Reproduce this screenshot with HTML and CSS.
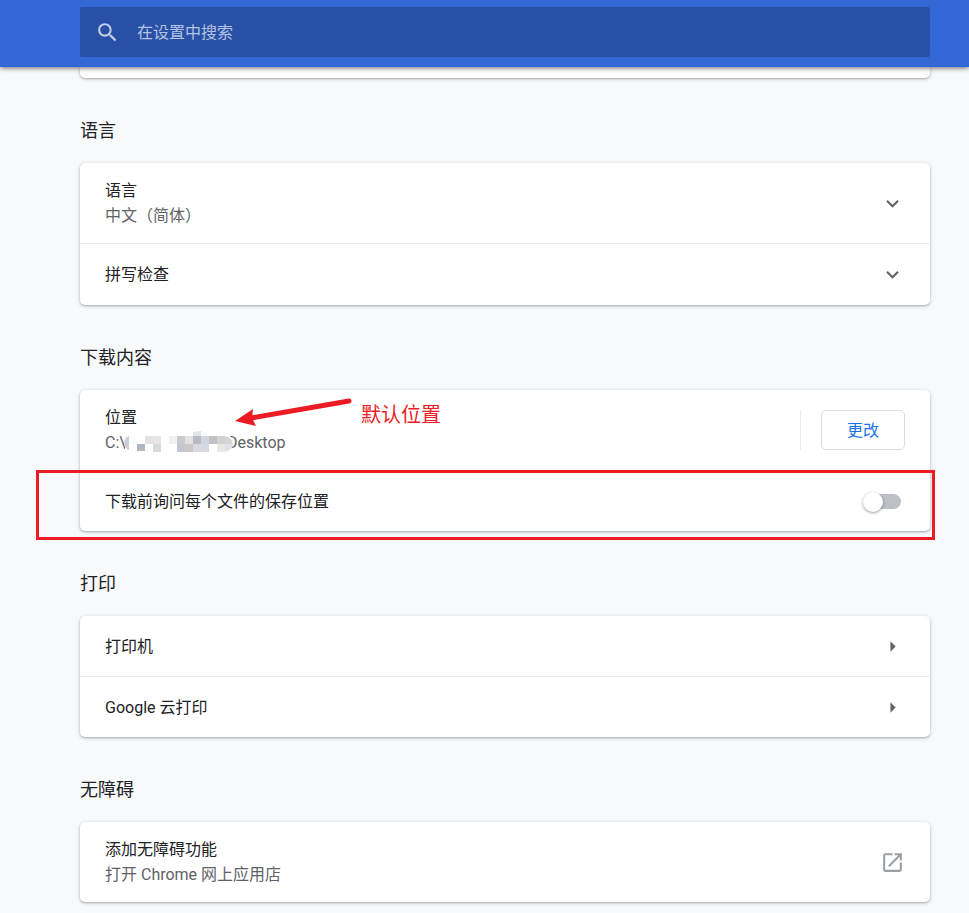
FILE: index.html
```html
<!DOCTYPE html>
<html lang="zh-CN">
<head>
<meta charset="UTF-8">
<meta name="viewport" content="width=device-width, initial-scale=1.0">
<title>设置</title>
<link rel="stylesheet" href="styles.css">
</head>
<body>
<header class="toolbar">
  <label class="search">
    <svg class="search-icon" viewBox="0 0 24 24" aria-hidden="true"><path d="M15.5 14h-.79l-.28-.27A6.47 6.47 0 0 0 16 9.5 6.5 6.5 0 1 0 9.5 16c1.61 0 3.09-.59 4.23-1.57l.27.28v.79l5 4.99L20.49 19l-4.99-5zm-6 0C7.01 14 5 11.99 5 9.5S7.01 5 9.5 5 14 7.01 14 9.5 11.99 14 9.5 14z"/></svg>
    <input type="search" placeholder="在设置中搜索" aria-label="在设置中搜索">
  </label>
</header>

<main class="settings">
  <div class="card card-end"></div>

  <section>
    <h2>语言</h2>
    <div class="card">
      <div class="row two-line">
        <div class="text">
          <div>语言</div>
          <div class="secondary">中文（简体）</div>
        </div>
        <button class="icon-button" aria-label="语言"><svg viewBox="0 0 24 24"><path d="M7.41 8.59 12 13.17l4.59-4.58L18 10l-6 6-6-6z"/></svg></button>
      </div>
      <div class="row expand">
        <div class="text">拼写检查</div>
        <button class="icon-button" aria-label="拼写检查"><svg viewBox="0 0 24 24"><path d="M7.41 8.59 12 13.17l4.59-4.58L18 10l-6 6-6-6z"/></svg></button>
      </div>
    </div>
  </section>

  <section>
    <h2>下载内容</h2>
    <div class="card">
      <div class="row two-line">
        <div class="text">
          <div>位置</div>
          <div class="secondary path">
            <span class="drive">C:\</span><span>Desktop</span>
            <svg class="mosaic" viewBox="0 0 112 24" aria-hidden="true">
              <path d="M3 4h100a8 9 0 0 1 0 18H3z" fill="#fff"/>
              <path d="M7 6v14q-5-2-5-7t5-7z" fill="#cfd0d6"/>
              <path d="M7 6h8v8H7z" fill="#f9fdf9"/>
              <path d="M15 14h8v7h-8z" fill="#b2b6c0"/>
              <path d="M23 6h8v8h-8z" fill="#e5e2e1"/>
              <path d="M31 6h8v8h-8z" fill="#e6e4e7"/>
              <path d="M31 14h8v8h-8z" fill="#d9d9e0"/>
              <path d="M47 6h8v8h-8z" fill="#ecf2f8"/>
              <path d="M55 6h8v8h-8z" fill="#c9cbcf"/>
              <path d="M55 14h8v8h-8z" fill="#c3c7d1"/>
              <path d="M63 6h8v8h-8z" fill="#e3e1e1"/>
              <path d="M63 14h8v8h-8z" fill="#cbc8c6"/>
              <path d="M71 2l8-1v5h-8z" fill="#e4e4e8"/>
              <path d="M71 6h8v8h-8z" fill="#b9bbc4"/>
              <path d="M71 14h8v8h-8z" fill="#d9dadf"/>
              <path d="M79 1l6 2 2 3h-8z" fill="#f8f9fc"/>
              <path d="M79 6h8v8h-8z" fill="#cfd4de"/>
              <path d="M79 14h8v8h-8z" fill="#d4d9e2"/>
              <path d="M87 6h8v8h-8z" fill="#c2c0c0"/>
              <path d="M95 6h8v8h-8z" fill="#d2d2d5"/>
              <path d="M95 14h8v8h-8z" fill="#ede6e2"/>
              <path d="M103 6q7 1 8 8h-8z" fill="#d5d5d8"/>
              <path d="M103 14h8q-1 6-8 8z" fill="#e0e1e6"/>
            </svg>
          </div>
        </div>
        <div class="action"><button class="change">更改</button></div>
        <div class="note">
          <svg viewBox="0 0 120 32" aria-hidden="true"><path d="M114 3 16 20" fill="none" stroke="#ed1c24" stroke-width="5" stroke-linecap="round"/><path d="M0 23 18 11 17 20 21 28z" fill="#ed1c24"/></svg>
          <span>默认位置</span>
        </div>
      </div>
      <div class="row">
        <label class="text" for="ask">下载前询问每个文件的保存位置</label>
        <input class="toggle" type="checkbox" id="ask">
        <div class="highlight"></div>
      </div>
    </div>
  </section>

  <section>
    <h2>打印</h2>
    <div class="card">
      <div class="row">
        <div class="text">打印机</div>
        <button class="icon-button" aria-label="打印机"><svg viewBox="0 0 24 24"><path d="M10 7l5 5-5 5z"/></svg></button>
      </div>
      <div class="row">
        <div class="text">Google 云打印</div>
        <button class="icon-button" aria-label="Google 云打印"><svg viewBox="0 0 24 24"><path d="M10 7l5 5-5 5z"/></svg></button>
      </div>
    </div>
  </section>

  <section>
    <h2>无障碍</h2>
    <div class="card">
      <div class="row two-line">
        <div class="text">
          <div>添加无障碍功能</div>
          <div class="secondary">打开 Chrome 网上应用店</div>
        </div>
        <button class="icon-button external" aria-label="添加无障碍功能"><svg viewBox="0 0 24 24"><path d="M19 19H5V5h7V3H5a2 2 0 0 0-2 2v14a2 2 0 0 0 2 2h14c1.1 0 2-.9 2-2v-7h-2v7zM14 3v2h3.59l-9.83 9.83 1.41 1.41L19 6.41V10h2V3h-7z"/></svg></button>
      </div>
    </div>
  </section>
</main>
</body>
</html>
```

FILE: styles.css
```css
* {
  box-sizing: border-box;
}

body {
  margin: 0;
  background: #f8f9fb;
  color: #202124;
  font: 16px/25px Roboto, "Noto Sans CJK SC", sans-serif;
}

button,
input {
  font: inherit;
}

.toolbar {
  position: sticky;
  top: 0;
  z-index: 2;
  padding: 7px 39px 10px 80px;
  background: #3367d6;
  box-shadow: 0 1px 5px rgba(0, 0, 0, 0.6);
}

.search {
  display: flex;
  align-items: center;
  height: 50px;
  padding: 0 15px;
  gap: 17px;
  border-radius: 2px;
  background: #2850a7;
}

.search-icon {
  width: 25px;
  height: 25px;
  fill: #c3cfe8;
}

.search input {
  flex: 1;
  padding: 0;
  border: 0;
  outline: 0;
  background: none;
  color: #fff;
}

.search input::placeholder {
  color: #b4c3e2;
}

.settings {
  padding: 0 39px 11px 80px;
}

.card {
  border-radius: 5px;
  background: #fff;
  box-shadow: 0 1px 2px rgba(60, 64, 67, 0.3), 0 1px 4px rgba(60, 64, 67, 0.2);
}

.card-end {
  height: 11px;
  border-radius: 0 0 5px 5px;
}

h2 {
  margin: 0;
  padding: 41px 0 20px;
  font-size: 18px;
  font-weight: 400;
  line-height: 24px;
}

.row {
  position: relative;
  display: flex;
  align-items: center;
  min-height: 60px;
  padding: 0 25px;
}

.row + .row {
  min-height: 61px;
  border-top: 1px solid #ececed;
}

.row + .expand {
  min-height: 62px;
}

.two-line {
  min-height: 80px;
}

.text {
  flex: 1;
}

.secondary {
  color: #5f6368;
}

.icon-button {
  display: flex;
  padding: 0;
  border: 0;
  background: none;
  cursor: pointer;
}

.icon-button svg {
  width: 25px;
  height: 25px;
  fill: #5f6368;
}

.icon-button.external svg {
  fill: #9aa0a6;
}

.path {
  position: relative;
}

.drive {
  display: inline-block;
  width: 122px;
}

.mosaic {
  position: absolute;
  left: 17px;
  top: 0;
  width: 112px;
  height: 24px;
}

.action {
  padding-left: 20px;
  border-left: 1px solid #ececed;
}

.change {
  display: block;
  width: 84px;
  height: 40px;
  padding: 0;
  border: 1px solid #dadce0;
  border-radius: 5px;
  background: #fff;
  color: #1a73e8;
  cursor: pointer;
}

/* hand-drawn notes on top of the page */
.note {
  position: absolute;
  left: 155px;
  top: 8px;
  display: flex;
  gap: 6px;
  color: #ed1c24;
  font-size: 20px;
  line-height: 34px;
}

.note svg {
  width: 120px;
  height: 32px;
}

.highlight {
  position: absolute;
  inset: -1px -5px -9px -44px;
  border: 3px solid #ed1c24;
  pointer-events: none;
}

.toggle {
  appearance: none;
  position: relative;
  width: 33px;
  height: 15px;
  margin: 0 4px 0 0;
  border-radius: 8px;
  background: #bdc1c6;
  cursor: pointer;
}

.toggle::before {
  content: "";
  position: absolute;
  left: -5px;
  top: -2px;
  width: 20px;
  height: 20px;
  border-radius: 50%;
  background: #fff;
  box-shadow: 0 1px 3px rgba(0, 0, 0, 0.4);
}

.toggle:checked {
  background: #8ab4f8;
}

.toggle:checked::before {
  left: 18px;
  background: #1a73e8;
}
```
